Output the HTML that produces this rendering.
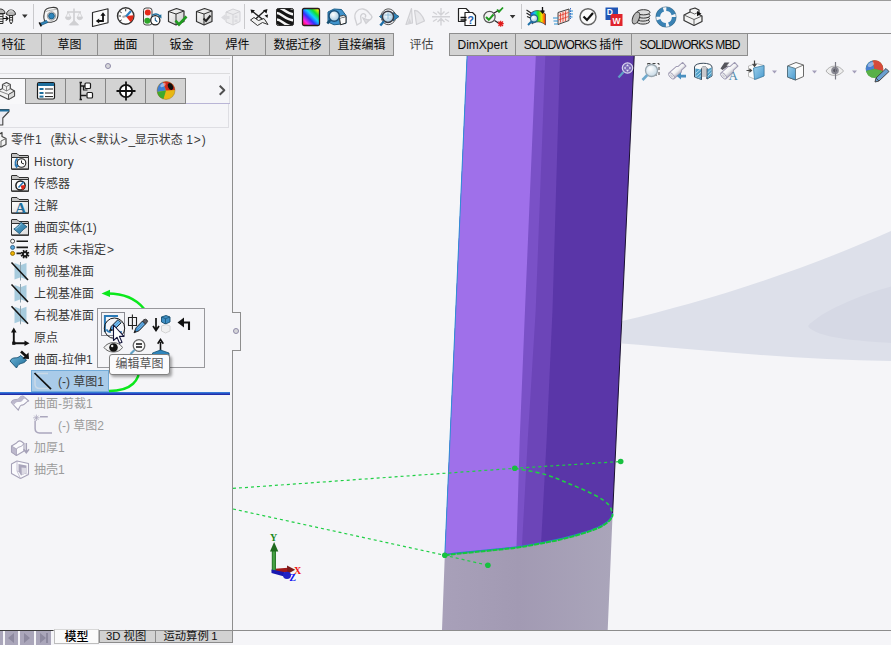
<!DOCTYPE html>
<html lang="zh-CN">
<head>
<meta charset="utf-8">
<title>SOLIDWORKS</title>
<style>
*{box-sizing:border-box;margin:0;padding:0}
html,body{width:891px;height:645px;overflow:hidden;background:#f5f5f8}
body{position:relative;font-family:"Liberation Sans","Noto Sans CJK SC",sans-serif;font-size:12px;color:#2b2b2b}
.abs{position:absolute}
/* command manager tabs */
#cmtabs{position:absolute;left:0;top:33px;height:23px;width:891px}
.cmt{position:absolute;top:0;height:23px;background:#d3d3d3;border-top:1px solid #8e8e8e;border-bottom:1px solid #8e8e8e;border-right:1px solid #8e8e8e;text-align:center;line-height:23px;font-size:12px;color:#0a0a0a;white-space:nowrap}
.cmt.act{background:#f5f5f8;border-top:none;border-bottom:none;color:#444;line-height:24px}
/* feature tree */
.row{position:absolute;left:0;height:22px;line-height:22px;white-space:nowrap;font-size:12px;color:#3a3a3a}
.row.sup{color:#9b9b9b}
.r1 span{position:absolute;top:0}
.ls{letter-spacing:-0.9px}
.hl{position:absolute;background:#f5f5f8}
/* bottom tabs */
.bt{position:absolute;top:630px;height:13px;background:#d2d2d2;border:1px solid #8c8c8c;font-size:11.3px;line-height:11px;text-align:center;color:#111;white-space:nowrap}
</style>
</head>
<body>
<!-- VIEWPORT GRAPHICS -->
<svg class="abs" id="vp" style="left:0;top:0" width="891" height="645" viewBox="0 0 891 645">
  <defs>
    <linearGradient id="shg" x1="442" y1="0" x2="612" y2="0" gradientUnits="userSpaceOnUse">
      <stop offset="0" stop-color="#a8a0b9"/><stop offset="0.45" stop-color="#a29ab3"/><stop offset="1" stop-color="#aaa5ba"/>
    </linearGradient>
    <clipPath id="surf"><path d="M467.1 56 L634.2 56 L612.6 514 L444.8 555.3 C447.4 555.0 454.3 554.1 460.2 553.5 C466.1 552.9 473.7 552.2 480.4 551.5 C487.1 550.8 493.9 550.2 500.6 549.5 C507.3 548.8 514.1 548.1 520.8 547.1 C527.5 546.1 534.3 544.7 541.0 543.4 C547.7 542.1 554.5 541.0 561.2 539.4 C567.9 537.8 575.3 535.8 581.4 533.9 C587.5 532.0 593.2 530.2 597.6 528.3 C602.0 526.3 605.3 524.1 607.7 522.2 C610.1 520.3 611.2 518.4 612.0 517.0 C612.8 515.6 612.5 514.5 612.6 514.0 L634.2 56 L467.1 56 L444.8 555.3 Z"/></clipPath>
    <clipPath id="surf2"><path d="M444.8 555.3 C447.4 555.0 454.3 554.1 460.2 553.5 C466.1 552.9 473.7 552.2 480.4 551.5 C487.1 550.8 493.9 550.2 500.6 549.5 C507.3 548.8 514.1 548.1 520.8 547.1 C527.5 546.1 534.3 544.7 541.0 543.4 C547.7 542.1 554.5 541.0 561.2 539.4 C567.9 537.8 575.3 535.8 581.4 533.9 C587.5 532.0 593.2 530.2 597.6 528.3 C602.0 526.3 605.3 524.1 607.7 522.2 C610.1 520.3 611.2 518.4 612.0 517.0 C612.8 515.6 612.5 514.5 612.6 514.0 L634.2 56 L467.1 56 Z"/></clipPath>
  </defs>
  <!-- floor reflection -->
  <path d="M622 321 C700 303 800 272 891 231 L891 361 C800 360 700 350 622 343.5 Z" fill="#dde0ea"/>
  <path d="M808 326 C820 312 860 295 891 286.5 L891 343 C860 341 815 338 808 326 Z" fill="#d6d9e5"/>
  <!-- shadow -->
  <path d="M444.8 555.3 C447.4 555.0 454.3 554.1 460.2 553.5 C466.1 552.9 473.7 552.2 480.4 551.5 C487.1 550.8 493.9 550.2 500.6 549.5 C507.3 548.8 514.1 548.1 520.8 547.1 C527.5 546.1 534.3 544.7 541.0 543.4 C547.7 542.1 554.5 541.0 561.2 539.4 C567.9 537.8 575.3 535.8 581.4 533.9 C587.5 532.0 593.2 530.2 597.6 528.3 C602.0 526.3 605.3 524.1 607.7 522.2 C610.1 520.3 611.2 518.4 612.0 517.0 C612.8 515.6 612.5 514.5 612.6 514.0 L607.7 630 L442 630 Z" fill="url(#shg)"/>
  <!-- purple surface -->
  <g clip-path="url(#surf2)">
    <path d="M440 56 L640 56 L640 560 L440 560 Z" fill="#5a36a8"/>
    <path d="M440 56 L560 56 L552.5 310 L546.6 440 L540.2 560 L440 560 Z" fill="#6c45b8"/>
    <path d="M440 56 L545.3 56 L535.7 310 L527.7 440 L521.2 560 L440 560 Z" fill="#7a51c7"/>
    <path d="M440 56 L535.8 56 L525 310 L519.7 440 L516.1 560 L440 560 Z" fill="#9f70ea"/>
  </g>
  <line x1="467.1" y1="56" x2="444.8" y2="555.3" stroke="#2f8fd6" stroke-width="1"/>
  <line x1="634.2" y1="56" x2="612.6" y2="514" stroke="#1a1030" stroke-width="1"/>
  <!-- sketch -->
  <g fill="none" stroke="#1fcf45" stroke-width="1.2">
    <path d="M444.8 555.3 C447.4 555.0 454.3 554.1 460.2 553.5 C466.1 552.9 473.7 552.2 480.4 551.5 C487.1 550.8 493.9 550.2 500.6 549.5 C507.3 548.8 514.1 548.1 520.8 547.1 C527.5 546.1 534.3 544.7 541.0 543.4 C547.7 542.1 554.5 541.0 561.2 539.4 C567.9 537.8 575.3 535.8 581.4 533.9 C587.5 532.0 593.2 530.2 597.6 528.3 C602.0 526.3 605.3 524.1 607.7 522.2 C610.1 520.3 611.2 518.4 612.0 517.0 C612.8 515.6 612.5 514.5 612.6 514.0" stroke-width="1.2" stroke="#2a7fd0" transform="translate(0,-0.8)"/>
    <path d="M444.8 555.3 C447.4 555.0 454.3 554.1 460.2 553.5 C466.1 552.9 473.7 552.2 480.4 551.5 C487.1 550.8 493.9 550.2 500.6 549.5 C507.3 548.8 514.1 548.1 520.8 547.1 C527.5 546.1 534.3 544.7 541.0 543.4 C547.7 542.1 554.5 541.0 561.2 539.4 C567.9 537.8 575.3 535.8 581.4 533.9 C587.5 532.0 593.2 530.2 597.6 528.3 C602.0 526.3 605.3 524.1 607.7 522.2 C610.1 520.3 611.2 518.4 612.0 517.0 C612.8 515.6 612.5 514.5 612.6 514.0" stroke-width="2" stroke="#14c83c" stroke-dasharray="5 1"/>
    <path d="M233 488.4 L514.8 468.3 L620.7 461.5" stroke-dasharray="3 3"/>
    <path d="M233 509 L444.8 555.3 L487.9 565.3" stroke-dasharray="3 3"/>
    <path d="M514.8 468.3 C519.9 469.3 535.9 471.8 545.2 474.5 C554.5 477.2 562.5 480.9 570.8 484.4 C579.1 487.8 588.7 491.8 595.0 495.2 C601.3 498.6 605.6 501.5 608.5 504.6 C611.4 507.7 611.9 512.4 612.6 514.0" stroke-dasharray="4 3" stroke-width="1.6"/>
  </g>
  <g fill="#18c040">
    <circle cx="514.8" cy="468.3" r="2.8"/><circle cx="620.7" cy="461.5" r="2.8"/>
    <circle cx="444.8" cy="555.3" r="2.8"/><circle cx="487.9" cy="565.3" r="2.8"/>
  </g>
</svg>

<!-- TRIAD -->
<svg class="abs" style="left:262px;top:528px" width="46" height="58" viewBox="262 528 46 58">
  <defs>
    <linearGradient id="gy" x1="0" y1="0" x2="1" y2="0"><stop offset="0" stop-color="#1f6a1f"/><stop offset="0.5" stop-color="#4fb04f"/><stop offset="1" stop-color="#1f6a1f"/></linearGradient>
  </defs>
  <path d="M275 568.8 L288 567.8 L288 572 L275 572 Z" fill="#a01818"/>
  <path d="M287 565.5 L295.2 569.8 L287.5 574 Z" fill="#7a1a1a"/>
  <path d="M271.8 551 H276 V571.5 H271.8 Z" fill="url(#gy)"/>
  <path d="M274.1 542 L278.3 551.5 H270 Z" fill="#1f6a1f"/>
  <path d="M271.5 569.5 L286 572.5 L286 577 L271.5 573 Z" fill="#1818b0"/>
  <ellipse cx="287" cy="575.3" rx="4" ry="3.6" fill="#2222c4"/>
  <text x="273.7" y="540.5" font-family="'Liberation Serif',serif" font-weight="bold" font-size="10" fill="#1a8a1a" text-anchor="middle">Y</text>
  <text x="297.7" y="573.6" font-family="'Liberation Serif',serif" font-weight="bold" font-size="10" fill="#f01010" text-anchor="middle">X</text>
  <text x="292.6" y="580.8" font-family="'Liberation Serif',serif" font-weight="bold" font-size="10" fill="#1010f0" text-anchor="middle">Z</text>
</svg>
<!-- LEFT PANEL -->
<div class="abs" id="panel" style="left:0;top:56px;width:233px;height:574px;background:#f5f5f8;border-right:1px solid #8e8e8e"></div>
<!-- splitter handle notch -->
<div class="abs" style="left:232px;top:312px;width:9px;height:39px;background:#f5f5f8;border:1px solid #8e8e8e;border-left:none"></div>
<div class="abs" style="left:233px;top:328px;width:6px;height:6px;border-radius:3px;background:#d6d6da;border:1px solid #8f8ba8"></div>
<!-- top strip with grip dot -->
<div class="abs" style="left:0;top:58px;width:230px;height:1px;background:#dcdcde"></div>
<div class="abs" style="left:229px;top:76px;width:1px;height:28px;background:#dedee3"></div>
<div class="abs" style="left:0;top:73px;width:230px;height:1px;background:#dcdcde"></div>
<div class="abs" style="left:105px;top:63px;width:6px;height:6px;border-radius:3px;background:#d6d6da;border:1px solid #8f8ba8"></div>
<!-- manager tabs -->
<div class="abs" style="left:0;top:78px;width:186px;height:1px;background:#7c7c7c"></div>
<div class="abs" style="left:0;top:79px;width:25px;height:25px;background:#f8f8fa"></div>
<div class="abs" style="left:25px;top:78px;width:161px;height:26px;background:#d3d3d3;border:1px solid #858585"></div>
<div class="abs" style="left:65px;top:79px;width:1px;height:24px;background:#858585"></div>
<div class="abs" style="left:105px;top:79px;width:1px;height:24px;background:#858585"></div>
<div class="abs" style="left:145px;top:79px;width:1px;height:24px;background:#858585"></div>
<div class="abs" style="left:186px;top:103px;width:44px;height:1px;background:#b9b5d6"></div>
<!-- filter box -->
<div class="abs" style="left:0;top:104px;width:229px;height:24px;border:1px solid #dedee3;border-left:none;border-top:none"></div>
<!-- feature tree -->
<div class="row r1" style="top:129px;left:0;width:229px"><span style="left:11px">零件1</span><span style="left:50.5px">(默认</span><span style="left:79.5px">&lt;</span><span style="left:88.8px">&lt;</span><span style="left:96.5px">默认</span><span style="left:120.8px">&gt;</span><span style="left:128.6px">_</span><span style="left:134.8px">显示状态</span><span style="left:186.3px">1</span><span style="left:193.8px">&gt;</span><span style="left:201.8px">)</span></div>
<div class="row" style="top:151px;left:34px;letter-spacing:0.4px">History</div>
<div class="row" style="top:173px;left:34px">传感器</div>
<div class="row" style="top:195px;left:34px">注解</div>
<div class="row" style="top:217px;left:34px">曲面实体(1)</div>
<div class="row" style="top:239px;left:34px">材质<span style="margin-left:5px">&lt;</span>未指定<span style="margin-left:1px">&gt;</span></div>
<div class="row" style="top:261px;left:34px">前视基准面</div>
<div class="row" style="top:283px;left:34px">上视基准面</div>
<div class="row" style="top:305px;left:34px">右视基准面</div>
<div class="row" style="top:327px;left:34px">原点</div>
<div class="row" style="top:349px;left:34px">曲面-拉伸1</div>
<div class="abs" style="left:31px;top:370px;width:78px;height:22px;background:#a9cbe9;border:1px solid #74acd9"></div>
<div class="row" style="top:371px;left:58px">(-) 草图1</div>
<div class="abs" style="left:0;top:392px;width:230px;height:3px;background:linear-gradient(#3b8ee0,#2a55c8 45%,#1d1d9c)"></div>
<div class="row sup" style="top:393px;left:34px">曲面-剪裁1</div>
<div class="row sup" style="top:415px;left:58px">(-) 草图2</div>
<div class="row sup" style="top:437px;left:34px">加厚1</div>
<div class="row sup" style="top:459px;left:34px">抽壳1</div>
<!-- bottom line + tabs -->
<div class="abs" style="left:0;top:631px;width:891px;height:14px;background:#f5f5f8"></div>
<div class="abs" style="left:0;top:630px;width:891px;height:1px;background:#8c8c8c"></div>
<div class="abs" style="left:0;top:630px;width:53px;height:1px;background:#3a3a3a"></div>
<div class="abs" style="left:0;top:631px;width:3px;height:14px;background:#aaa6ba"></div>
<div class="abs" style="left:5px;top:631px;width:13px;height:14px;background:#aaa6ba"></div>
<div class="abs" style="left:20px;top:631px;width:14px;height:14px;background:#aaa6ba"></div>
<div class="abs" style="left:36px;top:631px;width:15px;height:14px;background:#aaa6ba"></div>
<svg class="abs" style="left:0;top:630px" width="60" height="15" viewBox="0 630 60 15">
  <path d="M14 633 L14 643 L8 638 Z M24 633 L24 643 L30 638 Z M40 633 L40 643 L46 638 Z M46 633 h2 v10 h-2 Z" fill="#8d899f"/>
</svg>
<div class="bt" style="left:99px;width:57px;text-align:left;padding-left:6px">3D 视图</div>
<div class="bt" style="left:155px;width:78px;text-align:left;padding-left:7.5px">运动算例<span style="margin-left:2.5px">1</span></div>
<div class="abs" style="left:54px;top:629px;width:45px;height:15px;background:#fafafa;border:1px solid #bdbdbd;border-top:1px solid #d8d8d8;font-size:12px;line-height:14px;text-align:center;color:#000;font-weight:500;white-space:nowrap">模型</div>
<!-- COMMAND MANAGER TABS -->
<div id="cmtabs">
  <div class="abs" style="left:748px;top:0;width:143px;height:1px;background:#8e8e8e"></div>
  <div class="cmt" style="left:-14px;width:56px">特征</div>
  <div class="cmt" style="left:42px;width:56px">草图</div>
  <div class="cmt" style="left:98px;width:56px">曲面</div>
  <div class="cmt" style="left:154px;width:56px">钣金</div>
  <div class="cmt" style="left:210px;width:56px">焊件</div>
  <div class="cmt" style="left:266px;width:64px">数据迁移</div>
  <div class="cmt" style="left:330px;width:64px">直接编辑</div>
  <div class="cmt act" style="left:394px;width:56px">评估</div>
  <div class="cmt" style="left:449px;width:67px;border-left:1px solid #8e8e8e">DimXpert</div>
  <div class="cmt" style="left:516px;width:116px"><span class="ls">SOLIDWORKS</span> 插件</div>
  <div class="cmt" style="left:632px;width:116px"><span style="letter-spacing:-0.8px">SOLIDWORKS MBD</span></div>
</div>
<!-- TREE + PANEL ICONS -->
<svg class="abs" style="left:0;top:56px" width="233" height="574" viewBox="0 56 233 574">
  <defs>
    <linearGradient id="fold" x1="0" y1="0" x2="1" y2="1"><stop offset="0" stop-color="#ffffff"/><stop offset="1" stop-color="#d9d9d9"/></linearGradient>
    <linearGradient id="bluS" x1="0" y1="0" x2="1" y2="1"><stop offset="0" stop-color="#6db3d6"/><stop offset="1" stop-color="#1d6c99"/></linearGradient>
    <linearGradient id="grS" x1="0" y1="0" x2="1" y2="1"><stop offset="0" stop-color="#e4e2ea"/><stop offset="1" stop-color="#b4b0c4"/></linearGradient>
    <g id="folder">
      <path d="M11.5 16.5 V2 Q11.5 1.5 12 1.5 H17 L19 3.5 H28 Q28.5 3.5 28.5 4 V16.5 Z" fill="#c4c4c4" stroke="#2e2e2e" stroke-width="1" stroke-linejoin="round"/>
      <path d="M11.5 5.5 H28.5 V17 H11.5 Z" fill="url(#fold)" stroke="#2e2e2e" stroke-width="1" stroke-linejoin="round"/>
      <path d="M11.5 17.3 H28.8" stroke="#2e2e2e" stroke-width="1.1"/>
    </g>
    <g id="plane">
      <path d="M14.5 1.5 L20 3.5 L20 16 L14.5 18 Z" fill="#a7cbdd"/>
      <path d="M26.5 1.5 L21 3.5 L21 16 L26.5 18 Z" fill="#a7cbdd"/>
      <path d="M20.5 0.5 V19" stroke="#8fa3ae" stroke-width="1"/>
      <path d="M11.5 1 L28 18.5" stroke="#151515" stroke-width="1.6"/>
    </g>
  </defs>
  <!-- manager tab icons -->
  <g stroke-linejoin="round">
    <!-- feature manager (part) -->
    <path d="M-2 91 L2.5 88.5 V84.5 L6.5 82.5 L10.3 84.5 V88.5 L14.5 91 V96 L8.5 99.5 L-2 94.5 Z" fill="#f2f2f2" stroke="#4a4a4a" stroke-width="1.2"/>
    <path d="M2.5 84.5 L6.5 86.5 L10.3 84.5 M6.5 86.5 V91 L2.5 88.8 M6.5 91 L10.3 88.8 M8.5 94.5 L14.5 91 M8.5 94.5 V99.5 M8.5 94.5 L-2 90.5" stroke="#7a7a7a" stroke-width="0.9" fill="none"/>
    <path d="M8.5 94.5 L14.5 91 V96 L8.5 99.5 Z" fill="#dcdcdc" stroke="#4a4a4a" stroke-width="0.9"/>
    <!-- property manager -->
    <rect x="37.5" y="82.5" width="17" height="16.5" rx="1.5" fill="#ffffff" stroke="#1b1b1b" stroke-width="1.2"/>
    <rect x="38" y="83" width="16" height="3" fill="#1f6e9c"/>
    <rect x="39.5" y="88" width="4" height="2" fill="#1f6e9c"/><rect x="39.5" y="92" width="4" height="2" fill="#1f6e9c"/><rect x="39.5" y="95.6" width="4" height="2" fill="#1f6e9c"/>
    <path d="M45 89 h8 M45 93 h8 M45 96.6 h8" stroke="#1b1b1b" stroke-width="1"/>
    <!-- configuration manager -->
    <path d="M80.5 82.5 V99.5 M79.5 82.5 h2.5 M79.5 99.5 h2.5 M80.5 86 h5 M80.5 95.5 h6" stroke="#1b1b1b" stroke-width="1.4" fill="none"/>
    <rect x="85" y="83" width="5.5" height="5.5" rx="1" fill="#fff" stroke="#1b1b1b" stroke-width="1.2"/>
    <rect x="87" y="92.5" width="5.5" height="5.5" rx="1" fill="#fff" stroke="#1b1b1b" stroke-width="1.2"/>
    <path d="M83.5 86 v4 h4" stroke="#1b1b1b" stroke-width="1.2" fill="none"/>
    <!-- dimxpert manager -->
    <circle cx="126" cy="91" r="6.2" fill="#fff" stroke="#111" stroke-width="1.8"/>
    <path d="M126 81.5 V100.5 M116.5 91 H135.5" stroke="#111" stroke-width="1.8"/>
    <!-- display manager ball -->
    <circle cx="166" cy="90.5" r="9" fill="#e8b814"/>
    <path d="M166 90.5 L157.2 92 A9 9 0 0 1 163 82 Z" fill="#3f7fd6"/>
    <path d="M166 90.5 L163 82 A9 9 0 0 1 175 90 Z" fill="#d42a1e"/>
    <path d="M166 90.5 L157.2 92 A9 9 0 0 0 163.5 99.1 Z" fill="#3daa2e"/>
    <ellipse cx="170.5" cy="86.5" rx="2.4" ry="3.6" transform="rotate(-28 170.5 86.5)" fill="#111"/>
    <circle cx="166" cy="90.5" r="9" fill="none" stroke="#7a5a20" stroke-width="0.6" opacity="0.6"/>
    <ellipse cx="163" cy="85" rx="3" ry="1.6" fill="#fff" opacity="0.45" transform="rotate(-30 163 85)"/>
    <!-- chevron -->
    <path d="M219.7 85.7 L224.3 90.2 L219.7 94.7" fill="none" stroke="#505050" stroke-width="2"/>
    <!-- filter funnel -->
    <path d="M-2 109.5 H9 V111.5 L2.8 118 V125 H-2 Z" fill="#ececf2" stroke="#444" stroke-width="1.1"/>
    <path d="M-2 109.5 H9 V111.5 H-2 Z" fill="#1f6e9c"/>
  </g>
  <!-- part icon -->
  <path d="M-2 135 L2 132.5 L2 136.5 L6 138.5 L6 144.5 L1 147 L-2 145.5 Z" fill="#f4f4f4" stroke="#444" stroke-width="1.2" stroke-linejoin="round"/>
  <path d="M1 141 L6 138.5 M1 141 V147" stroke="#666" stroke-width="1" fill="none"/>
  <!-- History -->
  <use href="#folder" y="152"/>
  <circle cx="21.5" cy="163" r="4.3" fill="#fff" stroke="#222" stroke-width="1.1"/>
  <path d="M21.5 160.5 V163 L24 164" stroke="#222" stroke-width="1" fill="none"/>
  <path d="M17.5 158.5 A5.5 5.5 0 0 0 16.5 166" stroke="#2a78b4" stroke-width="1.8" fill="none"/>
  <path d="M14.2 164.5 L19 165 L16.5 168.5 Z" fill="#2a78b4"/>
  <!-- Sensors -->
  <use href="#folder" y="174"/>
  <circle cx="20.5" cy="185.5" r="4.6" fill="#fff" stroke="#1b1b1b" stroke-width="1.5"/>
  <path d="M20.5 185.5 L25 185 A4.6 4.6 0 0 1 22 190 Z" fill="#e02a1a"/>
  <path d="M18.5 187.5 L23.5 182" stroke="#2a78b4" stroke-width="1.6"/>
  <!-- Annotations -->
  <use href="#folder" y="196"/>
  <text x="20.6" y="212.6" font-family="'Liberation Serif',serif" font-weight="bold" font-size="15" fill="#1f6e9c" text-anchor="middle">A</text>
  <!-- Surface bodies -->
  <use href="#folder" y="218"/>
  <path d="M13.8 229 C16.5 227.5 18.5 225.5 21 222.3 L27 226.8 C24.5 228.5 22 230.5 19.5 233.8 Z" fill="url(#bluS)" stroke="#174f70" stroke-width="0.8"/><path d="M15.5 228.8 C18 227.3 19.5 226 21.3 223.8" stroke="#a8d4ea" stroke-width="0.8" fill="none"/>
  <!-- Material -->
  <circle cx="12.6" cy="241.2" r="2" fill="#fff" stroke="#333" stroke-width="0.9"/>
  <circle cx="12.6" cy="247.4" r="2" fill="#5aa7dc" stroke="#2a5a80" stroke-width="0.9"/>
  <circle cx="12.6" cy="253.4" r="2" fill="#f0b400" stroke="#8a6500" stroke-width="0.9"/>
  <path d="M16.5 241.2 H28 M16.5 247.4 H28 M16.5 253.4 H21" stroke="#1b1b1b" stroke-width="1.6"/>
  <path d="M26.8 255.0 L29.1 255.9 M25.8 256.0 L26.7 258.3 M24.2 256.0 L23.3 258.3 M23.2 255.0 L20.9 255.9 M23.2 253.4 L20.9 252.5 M24.2 252.4 L23.3 250.1 M25.8 252.4 L26.7 250.1 M26.8 253.4 L29.1 252.5" stroke="#1b1b1b" stroke-width="1.7"/>
  <circle cx="25" cy="254.2" r="3" fill="#1b1b1b"/><circle cx="25" cy="254.2" r="1.1" fill="#f5f5f8"/>
  <!-- Planes -->
  <use href="#plane" y="261.5"/>
  <use href="#plane" y="283.5"/>
  <use href="#plane" y="305.3"/>
  <!-- Origin -->
  <path d="M13.8 331 V343.2 H26" stroke="#111" stroke-width="1.9" fill="none"/>
  <path d="M13.8 327.5 L16.6 332.5 H11 Z M29.5 343.2 L24.5 340.4 V346 Z" fill="#111"/>
  <rect x="12.2" y="341.6" width="3.2" height="3.2" fill="#111"/>
  <!-- Surface-Extrude -->
  <path d="M10 361 C13 355.5 17 360 20.5 355.5 L26.5 360 C23 365.5 19.5 361 16.5 368 Z" fill="url(#bluS)" stroke="#174f70" stroke-width="0.9"/>
  <path d="M21 351.5 L26 356" stroke="#111" stroke-width="2.6"/>
  <path d="M29 359 L22.5 358.5 L28.5 352.5 Z" fill="#111"/>
  <!-- Surface-Trim (suppressed) -->
  <path d="M11.3 402.5 C14 397 17.5 402 20 397.5 C21 396 22 396 23.2 396.2 L28.7 401 C25.5 401.5 25 406 21.5 405 C20 405 19.5 407.5 18.3 410.2 Z" fill="#fbfbfd" stroke="#a6a2b8" stroke-width="1.1" stroke-linejoin="round"/>
  <path d="M14.5 404.5 C17 399.5 20.5 404.5 23.2 399.5 C24 398.3 25 398.3 26 398.6 L23.2 396.2 C22 396 21 396 20 397.5 C17.5 402 14 397 11.3 402.5 Z" fill="#bcb8cc"/>
  <!-- Thicken (suppressed) -->
  <path d="M11.5 446 L16.5 443 C18 441 19.5 440 21.5 441.5 L24 443.5 V451 L16.5 455.5 L11.5 452 Z" fill="#fbfbfd" stroke="#a6a2b8" stroke-width="1.1" stroke-linejoin="round"/>
  <path d="M11.5 446 L16.5 449 V455.5 L11.5 452 Z" fill="#bcb8cc" stroke="#a6a2b8" stroke-width="0.8"/>
  <path d="M16.5 449 C18.5 446 21 448 24 443.5" fill="none" stroke="#a6a2b8" stroke-width="1"/>
  <path d="M26.3 443 V452 M23.6 449.2 L26.3 452.8 L29 449.2" stroke="#a6a2b8" stroke-width="1.5" fill="none"/>
  <!-- Shell (suppressed) -->
  <path d="M11.5 464 L17 461 L28.5 463.5 V474.5 L20.5 478.5 L11.5 473.5 Z" fill="#fbfbfd" stroke="#a6a2b8" stroke-width="1.1" stroke-linejoin="round"/>
  <path d="M17 461 V471 L20.5 478.5 M17 471 L28.5 474.5" fill="none" stroke="#bcb8cc" stroke-width="0.8"/>
  <path d="M18.5 464 L26.5 465.5 V473 L21 475.5 L18.5 471 Z" fill="#a9a5bb"/>
  <path d="M21.5 467.5 L26.5 468 V473 L21.8 475 Z" fill="#dcdae4"/>
</svg>
<svg class="abs" style="left:30px;top:370px" width="30" height="66" viewBox="30 370 30 66">
  <!-- sketch1 icon -->
  <path d="M48 373.5 H39 Q35 373.5 35 378 V384 Q35 388.5 40 388.5 H49.5" fill="none" stroke="#c9d9e8" stroke-width="1.5"/>
  <path d="M34.5 373 L51 389.2" stroke="#111" stroke-width="1.7"/>
  <!-- sketch2 icon -->
  <path d="M47.8 416.8 H40 M35.1 420.5 V428.5 Q35.1 432.9 39.5 432.9 H52" fill="none" stroke="#aba7bd" stroke-width="1.5"/>
  <path d="M36.4 414.6 V421 M33.2 417.8 H39.6 M34.2 415.6 L38.6 420 M38.6 415.6 L34.2 420" stroke="#aba7bd" stroke-width="0.8"/>
</svg>
<!-- TOP TOOLBAR -->
<div class="abs" style="left:0;top:0;width:891px;height:1px;background:#9b9b9b"></div>
<svg class="abs" style="left:0;top:0" width="891" height="34" viewBox="0 0 891 34">
  <defs>
    <linearGradient id="rb" x1="0" y1="1" x2="1" y2="0">
      <stop offset="0" stop-color="#ff1010"/><stop offset="0.2" stop-color="#ff20e0"/><stop offset="0.4" stop-color="#3030ff"/><stop offset="0.58" stop-color="#10d0ff"/><stop offset="0.75" stop-color="#10e030"/><stop offset="0.92" stop-color="#f0f000"/>
    </linearGradient>
    <linearGradient id="rb2" x1="0" y1="0" x2="1" y2="0">
      <stop offset="0" stop-color="#2040ff"/><stop offset="0.3" stop-color="#10d0e0"/><stop offset="0.5" stop-color="#20e020"/><stop offset="0.75" stop-color="#f0e000"/><stop offset="1" stop-color="#ff2010"/>
    </linearGradient>
    <radialGradient id="lens" cx="0.4" cy="0.35" r="0.7"><stop offset="0" stop-color="#ffffff"/><stop offset="1" stop-color="#9cc4de"/></radialGradient>
    <linearGradient id="cubeL" x1="0" y1="0" x2="1" y2="1"><stop offset="0" stop-color="#ffffff"/><stop offset="1" stop-color="#c9c9c9"/></linearGradient>
  </defs>
  <!-- separators -->
  <path d="M33.5 4 V29 M244.5 4 V29 M521.5 4 V29" stroke="#c9c9cc" stroke-width="1"/>
  <!-- screws -->
  <g stroke="#2a2a2a" stroke-width="1">
    <path d="M-3 14 h6 v9.5 h-6 Z" fill="#f0f0f0"/>
    <path d="M-3 16.5 h6 M-3 19 h6 M-3 21.5 h6" fill="none" stroke-width="0.9"/>
    <path d="M-4 13.5 C-4 7.5 5 7.5 5 13.5 Z" fill="#b8b8b8"/>
    <path d="M9.6 15 h3 v6.5 l-1.5 2.5 l-1.5 -2.5 Z" fill="#f0f0f0"/>
    <path d="M9.6 17.5 h3 M9.6 20 h3" fill="none" stroke-width="0.9"/>
    <path d="M6.5 14.5 C6.5 8.5 15.5 8.5 15.5 14.5 C13 16 9 16 6.5 14.5 Z" fill="#b8b8b8"/>
    <path d="M8.5 12 C9.5 10.3 12.5 10.3 13.5 12" fill="none" stroke="#eee" stroke-width="1"/>
  </g>
  <path d="M3 18.5 H7.5 M5.8 16.3 L8 18.5 L5.8 20.7" stroke="#111" stroke-width="1.2" fill="none"/>
  <path d="M22 14.5 h5.6 l-2.8 3.6 Z M509.8 15 h5.6 l-2.8 3.4 Z" fill="#333"/>
  <!-- tape measure -->
  <path d="M44.5 12 C45 9 49 7.8 52 7.5 C55 7.2 57.5 7.8 57.8 10 C58.2 13 58 17.5 56.5 20 C54.5 22.3 48 23 45.5 21.5 C43.5 20 43.8 15 44.5 12 Z" fill="#f7f7f7" stroke="#3a3a3a" stroke-width="1.1"/>
  <path d="M44.8 12.3 C47 10.5 53 9.8 57.5 9.3" fill="none" stroke="#9a9a9a" stroke-width="0.8"/>
  <circle cx="51.5" cy="16" r="4.2" fill="#e0e0e4" stroke="#7a7a7a" stroke-width="0.7"/>
  <circle cx="51.5" cy="16" r="2.9" fill="#2f86bd" stroke="#174f70" stroke-width="0.8"/>
  <path d="M46.8 20.3 L40.5 23.2 L41.5 25.2 L48 22.4" fill="#2f86bd" stroke="#174f70" stroke-width="0.7"/>
  <path d="M39.3 22.3 L41.3 26.3" stroke="#111" stroke-width="1.7"/>
  <!-- scales (disabled) -->
  <g stroke="#cfcfd2" fill="none" stroke-width="1.6">
    <path d="M74 8.5 V22 M67 12 H81 M70 24.5 H78"/><path d="M74 21 L70.5 24.5 H77.5 Z" fill="#cfcfd2"/>
    <path d="M65.5 17 H71 A2.7 2.7 0 0 1 65.5 17 Z M77 17 H82.5 A2.7 2.7 0 0 1 77 17 Z" fill="#cfcfd2" stroke-width="0.8"/>
    <path d="M68.2 12 L66 17 M68.2 12 L70.5 17 M79.8 12 L77.5 17 M79.8 12 L82 17" stroke-width="0.8"/>
  </g>
  <!-- sketch on plane -->
  <path d="M92.5 12.5 L108 8.8 V22.8 L92.5 26.5 Z" fill="#fbfbfb" stroke="#2a2a2a" stroke-width="1.15" stroke-linejoin="round"/>
  <path d="M97.5 21 H103 V15" fill="none" stroke="#111" stroke-width="1.8"/>
  <path d="M103 12.3 L105.6 15.8 H100.4 Z M95.8 21 L99.2 18.6 V23.4 Z" fill="#111"/>
  <!-- gauge -->
  <circle cx="125.7" cy="16" r="8.2" fill="#fdfdfd" stroke="#333" stroke-width="1.4"/>
  <path d="M125.7 16 L133.5 15.2 A8 8 0 0 1 130.5 22 Z" fill="#e02a1a"/>
  <path d="M118.5 16 h2.5 M119.7 11.5 l2 1.3 M125.7 9 v2.3 M120 21 l1.8 -1.2" stroke="#333" stroke-width="1"/>
  <path d="M122.5 17 L126 16" stroke="#aaa" stroke-width="2"/>
  <path d="M126 16.5 L131 11" stroke="#2d7fc0" stroke-width="2.2"/>
  <!-- traffic light + clock -->
  <rect x="143.5" y="8" width="8.5" height="17" rx="2.5" fill="#f4f4f4" stroke="#444" stroke-width="1"/>
  <circle cx="147.8" cy="12.4" r="3" fill="#e52a1a"/><circle cx="147.3" cy="20.8" r="3" fill="#2fa52a"/>
  <circle cx="155.3" cy="20.3" r="4.6" fill="#fff" stroke="#222" stroke-width="1.3"/>
  <path d="M155.3 17.5 V20.3 L157.3 21.8" stroke="#1f5f90" stroke-width="1.1" fill="none"/>
  <path d="M152 15.5 A5.5 5.5 0 0 1 160 16" fill="none" stroke="#1f6e9c" stroke-width="1.4"/>
  <path d="M161.5 18.5 L158 16.3 L161.3 14.2 Z" fill="#1f6e9c"/>
  <!-- cube + green check -->
  <g id="cubeA">
    <path d="M168.5 11.5 L176.5 8.5 L184 11 V21.5 L176 25 L168.5 21.5 Z" fill="url(#cubeL)" stroke="#333" stroke-width="1.2" stroke-linejoin="round"/>
    <path d="M168.5 11.5 L176 14 L184 11 M176 14 V25" fill="none" stroke="#333" stroke-width="1"/>
  </g>
  <path d="M175.5 20.5 L179 24.5 L186.5 16.5" fill="none" stroke="#1f9a1f" stroke-width="2.6"/>
  <!-- cube + black check -->
  <use href="#cubeA" x="28"/>
  <path d="M203.5 18.5 L206 21 L210.5 15.5" fill="none" stroke="#222" stroke-width="2"/>
  <!-- disabled cube -->
  <g fill="#ececee" stroke="#d2d2d6" stroke-width="1">
    <path d="M226 12 L233 9 L240 11.5 V21.5 L233 25 L226 22 Z"/><path d="M226 12 L233 14.5 L240 11.5 M233 14.5 V25" fill="none"/>
    <path d="M221 17.5 L225.5 14 V16 H229.5 V19 H225.5 V21 Z" fill="#dcdce0" stroke="none"/>
    <rect x="234.5" y="15.5" width="3" height="2.5" fill="#dcdce0" stroke="none"/><rect x="234.5" y="19.5" width="3" height="2.5" fill="#dcdce0" stroke="none"/>
  </g>
  <!-- crossing arrows -->
  <path d="M252 11 L266 22 M265 10.5 L254 20.5" stroke="#222" stroke-width="1.4" fill="none"/>
  <path d="M250.5 9.5 L255 10.2 L251.6 13.6 Z M267.5 9 L266.5 13.5 L263 10.2 Z M268 14.5 L267.5 18 L264.5 15.5 Z" fill="#111"/>
  <path d="M250.5 20 L254 17.5 L258.5 20.5 L264 18.5 L268 24.5 L262.5 22.5 L257.5 25.5 Z" fill="#f2f2f2" stroke="#333" stroke-width="1"/>
  <!-- zebra -->
  <clipPath id="zc"><rect x="276.5" y="8.5" width="17" height="17" rx="1.8"/></clipPath>
  <rect x="276.5" y="8.5" width="17" height="17" rx="1.8" fill="#151515"/>
  <g clip-path="url(#zc)" stroke="#f4f4f4" stroke-width="2.5" fill="none">
    <path d="M274 13 C281 11 285 21 296 20.5"/><path d="M274 19.5 C281 17.5 285 27.5 296 27"/><path d="M276 7 C283 6.5 286 15 296 14.5"/><path d="M285 6 C289 7 291 9 296 9"/><path d="M274 25.5 C278 25 280 27 283 29"/>
  </g>
  <rect x="276.5" y="8.5" width="17" height="17" rx="1.8" fill="none" stroke="#2a2a2a" stroke-width="1"/>
  <!-- curvature rainbow -->
  <rect x="302.5" y="8.5" width="17" height="17" rx="1.5" fill="url(#rb)" stroke="#2a1a1a" stroke-width="1.3"/>
  <!-- magnifier + box -->
  <path d="M328 12 L334 9 L341.5 9.5 L346 15.5 V23.5 L334 24.8 L328 22 Z" fill="#3f93cc" stroke="#1d5f8a" stroke-width="1" stroke-linejoin="round"/>
  <path d="M339.5 18.2 L346 16.5 V23 L340.5 24.8 Z" fill="#fafafa" stroke="#2a2a2a" stroke-width="1" stroke-linejoin="round"/>
  <path d="M339.5 18.2 L337.5 16.8 L343.5 15.3 L346 16.5" fill="#e4e4e4" stroke="#2a2a2a" stroke-width="0.8" stroke-linejoin="round"/>
  <circle cx="334.2" cy="16" r="5.2" fill="url(#lens)" stroke="#1a4f78" stroke-width="1.5"/>
  <path d="M330.3 20 L327.3 23.6" stroke="#174f70" stroke-width="2.4"/>
  <!-- disabled -->
  <g fill="none" stroke="#d0d0d4" stroke-width="1.3">
    <path d="M355.5 20 C353 13 358 8.5 363 9 C368 9.5 368.5 13 371 15 C373 17 371 21 367.5 19.5 M355.5 20 L357 25 L361 22.5 C362 19 359 17 361.5 14.5 C364 12.5 367 15 365 17.5"/>
    <path d="M363 18 L369 20.5 L366 23.5 Z" fill="#dcdce0"/>
  </g>
  <!-- magnifier + globe -->
  <path d="M379.5 16.5 L384 13 V20.5 Z M399 16.5 L393 12.5 V21 Z" fill="#2f86bd" stroke="#174f70" stroke-width="0.8" stroke-linejoin="round"/>
  <path d="M381 15 C384 7 392 7 395.5 14 M381.5 19 C384 26.5 392 26.5 395.5 19.5" fill="none" stroke="#555" stroke-width="1"/>
  <circle cx="388" cy="16.8" r="5.6" fill="url(#lens)" stroke="#3a3a44" stroke-width="1.5"/>
  <path d="M384.5 15 H391.5 M388 12.5 V19" stroke="#7aaed0" stroke-width="0.8"/>
  <path d="M384 21.3 L380.3 25.5" stroke="#1d6fa8" stroke-width="2.4"/>
  <!-- disabled symmetry -->
  <g fill="#e9e9ec" stroke="#d0d0d4" stroke-width="1.2" stroke-linejoin="round">
    <path d="M411.5 8.5 L412.5 23 L406 24.5 Z"/><path d="M414.5 10.5 C418 10 423 16 424.5 21 L416.5 24.5 Z"/>
    <path d="M407.5 24 L409.5 18 L411.5 23 Z" fill="#d4d4d8" stroke="none"/>
  </g>
  <!-- disabled arrows -->
  <g stroke="#d2d2d6" stroke-width="1.4" fill="none">
    <path d="M441 8 V14.5 M441 25.5 V19 M432 16.8 H450 M437.5 11.5 L441 15 L444.5 11.5 M437.5 22 L441 18.5 L444.5 22 M433 12 L437 14.5 M449 12 L445 14.5 M433 21.5 L437 19 M449 21.5 L445 19"/>
  </g>
  <!-- doc with ? -->
  <path d="M458.5 8.5 H466 L469 11.5 V21.5 H458.5 Z" fill="#fff" stroke="#222" stroke-width="1.2" stroke-linejoin="round"/>
  <path d="M465 12.5 H472.5 L475.5 15.5 V25.5 H465 Z" fill="#fff" stroke="#222" stroke-width="1.2" stroke-linejoin="round"/>
  <path d="M460.5 17.5 H466.5 M460.5 20 H466.5" stroke="#111" stroke-width="1.3"/>
  <text x="470.6" y="24.3" font-family="'Liberation Sans',sans-serif" font-weight="bold" font-size="11" fill="#1f5fb0" text-anchor="middle">?</text>
  <!-- checks -->
  <circle cx="489.5" cy="17" r="5.6" fill="#f2f2f2" stroke="#555" stroke-width="1.2"/>
  <path d="M486 17 L488.8 19.8 L493.5 14.5" fill="none" stroke="#1f9a1f" stroke-width="2"/>
  <path d="M494 13 L499.5 10 M494.5 20.5 L498.5 23" stroke="#222" stroke-width="1.2"/>
  <path d="M497 9.5 L499 11.8 L503 7.5" fill="none" stroke="#1f9a1f" stroke-width="1.8"/>
  <path d="M498.5 21.5 L503 26 M503 21.5 L498.5 26 M500.7 20.8 V26.7 M497.8 23.7 H503.7" stroke="#e01a1a" stroke-width="1.2"/>
  <!-- simulation -->
  <path d="M530.5 13.5 C535 9 541 10 545.5 14 V25 C541 21 536 21 532 24 Z" fill="url(#rb2)" stroke="#333" stroke-width="0.7"/>
  <path d="M542.5 7 V12 M540.7 10.5 L542.5 13 L544.3 10.5" stroke="#111" stroke-width="1.3" fill="none"/>
  <path d="M526.5 10 L531 13 M526.5 13 L530.5 15.5 M527 16.5 L530.5 18" stroke="#222" stroke-width="1.1"/>
  <circle cx="534" cy="18.5" r="3.6" fill="url(#lens)" stroke="#1d5f8a" stroke-width="1.2"/>
  <path d="M531.5 21.5 L528 25" stroke="#1d6fa8" stroke-width="2"/>
  <!-- flow -->
  <path d="M558 12.5 L569 9 V20.5 L558 24.5 Z" fill="#f7d9d4" stroke="#444" stroke-width="1"/>
  <path d="M560.5 13 V22.5 M563 12 V21.8 M565.5 11.2 V21 M558.5 16 L568.5 12.5 M558.5 20 L568.5 16.5" stroke="#e03a2a" stroke-width="0.8"/>
  <path d="M553 18 H558 M553.5 21 H558 M554 24 H558 M569 11 H573 M569 14 H573 M569 17 H572.5" stroke="#2a8fd0" stroke-width="1"/>
  <path d="M570.5 8 V19" stroke="#2a60c0" stroke-width="0.9" stroke-dasharray="1.5 1"/>
  <!-- check circle -->
  <circle cx="588" cy="16.8" r="8" fill="#fbfbfb" stroke="#666" stroke-width="1.5"/>
  <path d="M583.5 16.5 L587 20 L593 13" fill="none" stroke="#111" stroke-width="2.2"/>
  <!-- DW -->
  <rect x="605.5" y="7.5" width="12.5" height="12.5" fill="#1f55b5"/>
  <rect x="610.5" y="14" width="12" height="12" fill="#e0242c"/>
  <text x="609.8" y="15.3" font-family="'Liberation Sans',sans-serif" font-weight="bold" font-size="8.5" fill="#fff" text-anchor="middle">D</text>
  <text x="616.6" y="24" font-family="'Liberation Sans',sans-serif" font-weight="bold" font-size="8.5" fill="#fff" text-anchor="middle">W</text>
  <!-- coins -->
  <g fill="#dcdcdc" stroke="#333" stroke-width="1">
    <ellipse cx="643" cy="21.5" rx="6.5" ry="2.6"/><ellipse cx="643" cy="18.5" rx="6.5" ry="2.6"/><ellipse cx="643.5" cy="15.5" rx="6.5" ry="2.6"/><ellipse cx="643.5" cy="12.3" rx="6.5" ry="2.6"/>
    <ellipse cx="636" cy="18" rx="3.2" ry="6.3" transform="rotate(22 636 18)" fill="#b8b8b8"/>
  </g>
  <!-- sustainability -->
  <circle cx="666" cy="17" r="8" fill="none" stroke="#3a82b4" stroke-width="4.2" stroke-dasharray="9.6 3"/>
  <circle cx="666" cy="17" r="10.2" fill="none" stroke="#174f70" stroke-width="0.5"/>
  <path d="M663 17 L666 14 L669 17 L666 20 Z" fill="#f5f5f8"/>
  <!-- 3d content cube -->
  <path d="M684 15 L690 12 V9.5 L695 8 L699 10 V14.5 L702 16 V21.5 L694 25.5 L684 20.5 Z" fill="#f3f3f3" stroke="#333" stroke-width="1.2" stroke-linejoin="round"/>
  <path d="M684 15 L694 19.5 L702 16 M694 19.5 V25.5 M690 12 L694.5 14 L699 12" fill="none" stroke="#555" stroke-width="0.9"/>
  <path d="M697 11 L701.5 13.7 L697 16.3 Z" fill="#111"/>
</svg>
<!-- HEADS-UP VIEW TOOLBAR -->
<svg class="abs" style="left:610px;top:56px" width="281" height="36" viewBox="610 56 281 36">
  <defs>
    <radialGradient id="lens2" cx="0.4" cy="0.35" r="0.7"><stop offset="0" stop-color="#ffffff"/><stop offset="1" stop-color="#c4d8e6"/></radialGradient>
    <linearGradient id="blf" x1="0" y1="0" x2="1" y2="1"><stop offset="0" stop-color="#9fd0ea"/><stop offset="1" stop-color="#4a9bd0"/></linearGradient>
    <linearGradient id="scope" x1="0" y1="0" x2="0" y2="1"><stop offset="0" stop-color="#ffffff"/><stop offset="0.55" stop-color="#f0f0f2"/><stop offset="1" stop-color="#b4b2c0"/></linearGradient>
  </defs>
  <!-- zoom to fit -->
  <circle cx="627.5" cy="68" r="5.2" fill="#7a68b8" stroke="#d8d4ee" stroke-width="1.2"/>
  <path d="M627.5 64.3 L629 66.2 H626 Z M627.5 71.7 L629 69.8 H626 Z M623.8 68 L625.7 66.5 V69.5 Z M631.2 68 L629.3 66.5 V69.5 Z" fill="#e6e2f6"/>
  <path d="M623.5 72 L618.5 77.5" stroke="#5f9fc4" stroke-width="2.2"/>
  <!-- zoom to area -->
  <rect x="647.5" y="63.5" width="11.5" height="11.5" fill="none" stroke="#444" stroke-width="1" stroke-dasharray="3 2"/>
  <circle cx="651.5" cy="70.5" r="6" fill="url(#lens2)" stroke="#9aa7b0" stroke-width="1.3"/>
  <path d="M647.3 75 L642.5 80" stroke="#6fa9cc" stroke-width="2.6"/>
  <!-- previous view -->
  <g id="scopeg" transform="rotate(-42 678 70)">
    <path d="M669 66.2 H679 L680.5 67.5 H686.5 V72.5 H680.5 L679 73.8 H669 Z" fill="url(#scope)" stroke="#a09cb4" stroke-width="1" stroke-linejoin="round"/>
    <ellipse cx="669.3" cy="70" rx="2" ry="3.8" fill="#f0f0f2" stroke="#a09cb4" stroke-width="0.9"/>
    <ellipse cx="669.3" cy="70" rx="0.9" ry="2" fill="#cfcfd6"/>
  </g>
  <path d="M676.8 76 L681 72.6 V74.8 H686 V77.4 H681 V79.5 Z" fill="#4a90c0"/>
  <!-- section view -->
  <path d="M694.5 67 C694.5 62 712 62 712 67 V76 L707 79 V68.5 C706 66 702.5 66 701.5 68.5 V79.5 L694.5 77 Z" fill="#fafafa" stroke="#3a4a5a" stroke-width="1" stroke-linejoin="round"/>
  <path d="M701.5 68.5 C702.5 65.5 706 65.5 707 68.5 V77 H701.5 Z" fill="#c9c9cd"/>
  <path d="M695.3 68.5 L701.5 69.5 V79.3 L695.3 77 Z" fill="#4f9fc8"/>
  <path d="M707 69.5 L711.5 67.5 V76 L707 78.7 Z" fill="#4f9fc8"/>
  <path d="M695.5 73.5 L700 69.5 M695.5 77 L701.3 72 M698 78.3 L701.3 75.3 M707.2 73.5 L711 69.5 M707.2 77 L711.3 72.5" stroke="#bfe2f2" stroke-width="0.9"/>
  <path d="M701.5 68.5 V79.5 M707 68.5 V79" stroke="#3a4a5a" stroke-width="0.8"/>
  <!-- view orientation scope + A -->
  <use href="#scopeg" x="52" y="0"/>
  <path d="M720.5 68.5 L724.5 62.5 H729.5 L726.5 65.8 H728.5 L722.5 70 Z" fill="#55555c"/>
  <text x="733.2" y="80.3" font-family="'Liberation Serif',serif" font-size="13" fill="#4a86aa" text-anchor="middle">A</text>
  <!-- view orientation cube -->
  <path d="M748.5 66 L756.5 63.5 L764 65.5 V76 L755.5 79.5 L748.5 76.5 Z" fill="#fdfdfd" stroke="#b4b4b4" stroke-width="0.9" stroke-linejoin="round"/>
  <path d="M753.5 68 L764 65.5 V76 L754.5 79.5 Z" fill="url(#blf)" stroke="#3a7fa8" stroke-width="0.8"/>
  <path d="M754.5 60.5 V65.5 M752.6 63.8 L754.5 66.2 L756.4 63.8 M746.5 70.5 H751 M749.3 68.7 L751.5 70.5 L749.3 72.3" fill="none" stroke="#444" stroke-width="1.2"/>
  <path d="M772 70.5 H777 L774.5 73.6 Z M812 70.5 H817 L814.5 73.6 Z M852 70.5 H857 L854.5 73.6 Z" fill="#a49fba"/>
  <!-- display style -->
  <path d="M787.5 66 L796 62.5 L803.5 65 V76.5 L795.5 80 L787.5 77 Z" fill="#fcfcfc" stroke="#6a6a6a" stroke-width="1" stroke-linejoin="round"/>
  <path d="M787.5 66 L795.5 68.5 V80 L787.5 77 Z" fill="url(#blf)" stroke="#4a6a7a" stroke-width="0.8"/>
  <path d="M795.5 68.5 L803.5 65" stroke="#6a6a6a" stroke-width="0.9"/>
  <!-- hide/show eye -->
  <path d="M826 71 C830 64.5 839 64.5 843.5 71 C839 77 830 77 826 71 Z" fill="#eeeeee" stroke="#b0b0b0" stroke-width="1"/>
  <circle cx="835" cy="70.5" r="3.8" fill="#8a8a94"/><circle cx="835" cy="70.5" r="1.8" fill="#55555e"/>
  <path d="M835.5 62 V79.5" stroke="#7a7a84" stroke-width="1.2"/>
  <!-- appearance ball -->
  <circle cx="874.5" cy="69" r="8.7" fill="#4a9a3a"/>
  <path d="M874.5 69 L866 71 A8.7 8.7 0 0 1 872.5 60.5 Z" fill="#4a80d0"/>
  <path d="M874.5 69 L872.5 60.5 A8.7 8.7 0 0 1 883 71 Z" fill="#d64a3a"/>
  <path d="M874.5 69 L866 71 A8.7 8.7 0 0 0 883 71 Z" fill="#58b048"/>
  <ellipse cx="871" cy="64.5" rx="3.4" ry="2" fill="#fff" opacity="0.4" transform="rotate(-30 871 64.5)"/>
  <path d="M886 68.5 L889 71.5 L879 81 L875 82 L876 78 Z" fill="#6a9fd0" stroke="#3a3a3a" stroke-width="0.9" stroke-linejoin="round"/>
  <path d="M876 78 L879 81" stroke="#3a3a3a" stroke-width="0.8"/>
</svg>
<!-- GREEN RELATION ARROW -->
<svg class="abs" style="left:90px;top:280px" width="160" height="120" viewBox="90 280 160 120">
  <path d="M109 391 C132 391 140 380 139.5 366 L143.8 308.5 C137 300.3 125 293.5 108 293.5" fill="none" stroke="#0be81c" stroke-width="2.4"/>
  <path d="M101.5 293.5 L110 289.8 L110 297 Z" fill="#0be81c"/>
</svg>
<!-- CONTEXT TOOLBAR -->
<div class="abs" style="left:97px;top:308px;width:108px;height:60px;background:#f5f5f8;border:1px solid #98989c"></div>
<div class="abs" style="left:101px;top:312px;width:24px;height:24px;background:#f3f4f8;border:1px solid #8a8a92"></div>
<svg class="abs" style="left:97px;top:308px" width="108" height="60" viewBox="97 308 108 60">
  <!-- edit sketch -->
  <path d="M104.9 332 V315.9 H118" fill="none" stroke="#2a7ab8" stroke-width="2"/>
  <path d="M106.5 329.3 C107.5 331.5 109 332 111 332 M117.2 332 H122" fill="none" stroke="#2a7ab8" stroke-width="1.6"/>
  <circle cx="114.5" cy="328.2" r="10.2" fill="none" stroke="#1a1a1a" stroke-width="1"/>
  <path d="M111.3 326.3 L118 319.6 L121.2 322.8 L114.5 329.5 L109.6 331 Z" fill="#4a9fe0" stroke="#1a1a1a" stroke-width="0.9" stroke-linejoin="round"/>
  <path d="M112.7 326.8 L118.7 320.8 M114 328.2 L120 322.2" stroke="#b4dcf6" stroke-width="0.7"/>
  <path d="M109.6 331 L110.5 328.3 L112.4 330.1 Z" fill="#1a1a1a"/>
  <!-- edit sketch plane -->
  <path d="M132.4 314.5 V329.5 M128.5 317.5 H136.5 V325.5 H128.5 Z" fill="none" stroke="#222" stroke-width="1.1"/>
  <path d="M136 327.8 L142.5 321 L145.5 324 L139 330.8 L134 332.8 Z" fill="#3f8fd0" stroke="#222" stroke-width="0.9" stroke-linejoin="round"/>
  <path d="M137.3 328.5 L143.2 322.3 M138.4 329.6 L144.4 323.4" stroke="#9fd0f0" stroke-width="0.6"/>
  <path d="M142.5 321 L144 319.6 Q145.8 318.6 147 320 Q148.2 321.5 147 322.6 L145.5 324 Z" fill="#5a5a62" stroke="#222" stroke-width="0.8"/>
  <path d="M134 332.8 L135 330.2 L136.6 331.8 Z" fill="#222"/>
  <!-- insert part -->
  <path d="M156 318 V329 M153 326 L156 330.5 L159 326" fill="none" stroke="#111" stroke-width="1.7"/>
  <path d="M161.5 317 L166 315.5 L170 317 V322 L165.5 324 L161.5 322 Z" fill="#3f8fc4" stroke="#174f70" stroke-width="0.9"/>
  <path d="M161.5 317 L165.5 318.7 L170 317 M165.5 318.7 V324" fill="none" stroke="#174f70" stroke-width="0.7"/>
  <path d="M161.5 326 L166 324.5 L170 326 V331 L165.5 333 L161.5 331 Z" fill="#f0f0f0" stroke="#cfcfcf" stroke-width="0.9"/>
  <!-- rollback arrow -->
  <path d="M189 330 V322.5 H181" fill="none" stroke="#111" stroke-width="2.1"/>
  <path d="M177.5 322.5 L184 317.5 V327.5 Z" fill="#111"/>
  <!-- eye -->
  <path d="M104 347.5 C108 341 119 341 122.5 347.5 C119 353.5 108 353.5 104 347.5 Z" fill="#f2f2f2" stroke="#666" stroke-width="1"/>
  <circle cx="113.5" cy="347.5" r="4.3" fill="#111"/><circle cx="112.2" cy="346" r="1.2" fill="#eee"/>
  <!-- zoom to selection -->
  <circle cx="139" cy="345.5" r="5.8" fill="#fafafa" stroke="#666" stroke-width="1.3"/>
  <path d="M136 344 H142 M136 347 H142" stroke="#111" stroke-width="1.6"/>
  <path d="M134.5 350 L130.5 354" stroke="#5f9fc4" stroke-width="2.2"/>
  <!-- normal to -->
  <path d="M160.5 342 V353 M157.7 343.8 L160.5 339.5 L163.3 343.8" fill="none" stroke="#111" stroke-width="1.6"/>
  <path d="M152.5 353 L160.5 350 L169 353 V356 H152.5 Z" fill="#2f86bd" stroke="#174f70" stroke-width="0.8"/>
</svg>
<!-- cursor -->
<svg class="abs" style="left:110px;top:322px" width="16" height="24" viewBox="0 0 16 24">
  <path d="M3.5 3 V18.5 L7 15.3 L9.6 21.3 L12 20.2 L9.4 14.4 H14 Z" fill="#fff" stroke="#14143a" stroke-width="1.1" stroke-linejoin="round"/>
</svg>
<!-- TOOLTIP -->
<div class="abs" style="left:109px;top:354px;width:61px;height:21px;background:#fbfbfd;border:1px solid #828282;border-radius:3px;box-shadow:2px 2px 3px rgba(0,0,0,0.35);font-size:12px;line-height:19px;color:#555;text-align:center;white-space:nowrap">编辑草图</div>
</body>
</html>
